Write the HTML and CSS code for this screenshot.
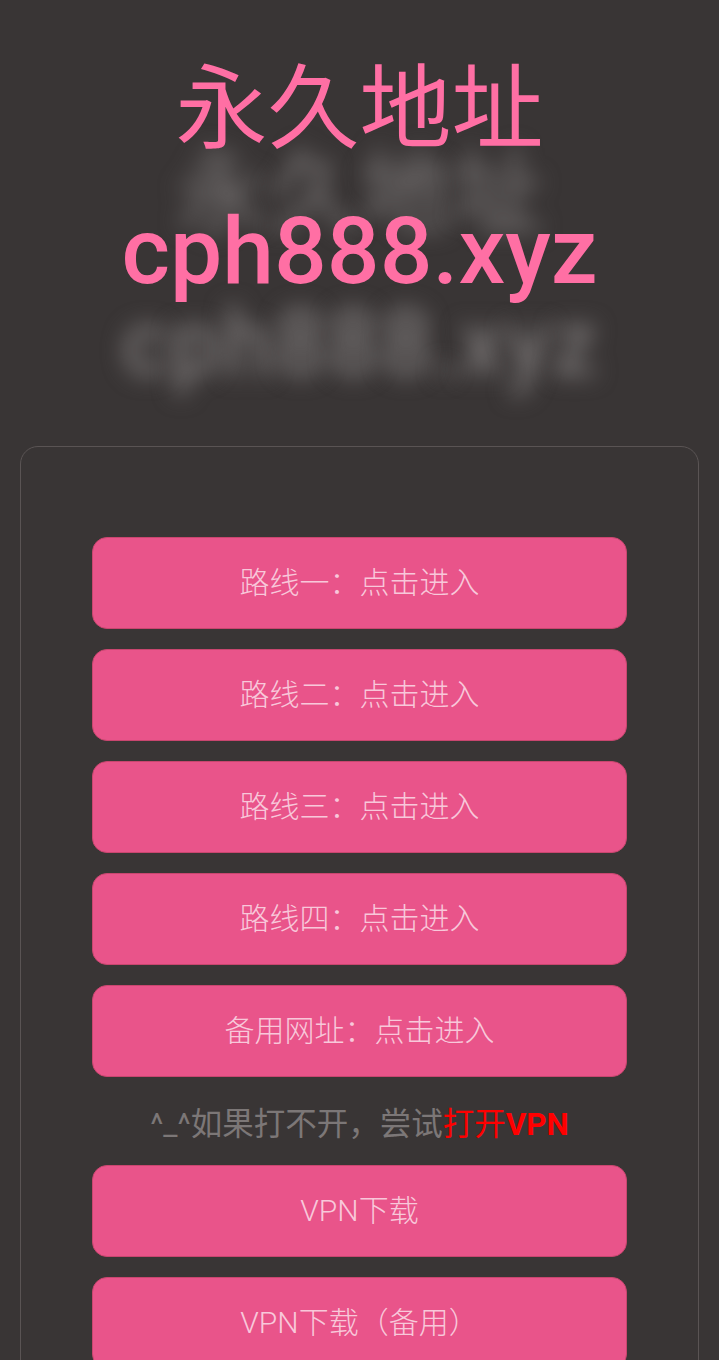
FILE: index.html
```html
<!DOCTYPE html>
<html lang="zh-CN">
<head>
<meta charset="utf-8">
<title>永久地址</title>
<link rel="stylesheet" href="styles.css">
</head>
<body>
<header class="hero">
  <h1 class="hero-title">永久地址</h1>
  <div class="hero-domain">cph888.xyz</div>
</header>
<main class="card">
  <a class="btn" href="#">路线一：点击进入</a>
  <a class="btn" href="#">路线二：点击进入</a>
  <a class="btn" href="#">路线三：点击进入</a>
  <a class="btn" href="#">路线四：点击进入</a>
  <a class="btn" href="#">备用网址：点击进入</a>
  <p class="note">^_^如果打不开，尝试<span class="note-hl">打开<b>VPN</b></span></p>
  <a class="btn" href="#">VPN下载</a>
  <a class="btn" href="#">VPN下载（备用）</a>
</main>
</body>
</html>
```
FILE: styles.css
```css
html, body {
  margin: 0;
  padding: 0;
  background: #393535;
}
body {
  font-family: Roboto, "Noto Sans CJK SC", sans-serif;
  overflow: hidden;
  height: 1360px;
}
.hero {
  padding-top: 40px;
  text-align: center;
}
.hero-title {
  margin: 0;
  font-family: Roboto, "Noto Sans CJK SC", sans-serif;
  font-size: 92px;
  font-weight: 400;
  line-height: 140px;
  color: #ff6fa4;
  text-shadow: 0 84px 22px #7a7676;
}
.hero-domain {
  margin-top: 12px;
  font-family: Roboto, "Noto Sans CJK SC", sans-serif;
  font-size: 93px;
  font-weight: 500;
  line-height: 120px;
  color: #ff6fa4;
  text-shadow: 0 92px 22px #7a7676;
}
.card {
  margin: 134px 20px 0;
  border: 1px solid #5a5454;
  border-radius: 18px;
  padding: 90px 71px 40px;
  display: flex;
  flex-direction: column;
  gap: 20px;
}
.btn {
  display: flex;
  align-items: center;
  justify-content: center;
  box-sizing: border-box;
  height: 92px;
  padding-bottom: 6px;
  background: #e9548a;
  border: 1px solid #c9466f;
  border-radius: 15px;
  color: #f8c8da;
  font-family: Roboto, "Noto Sans CJK SC", sans-serif;
  font-weight: 300;
  font-size: 30px;
  text-decoration: none;
}
.note {
  margin: 0;
  height: 48px;
  display: flex;
  align-items: center;
  justify-content: center;
  color: #7c7777;
  font-size: 31.5px;
  font-family: Roboto, "Noto Sans CJK SC", sans-serif;
}
.note-hl {
  color: #ff0000;
}
.note-hl b {
  font-weight: 700;
}
```
